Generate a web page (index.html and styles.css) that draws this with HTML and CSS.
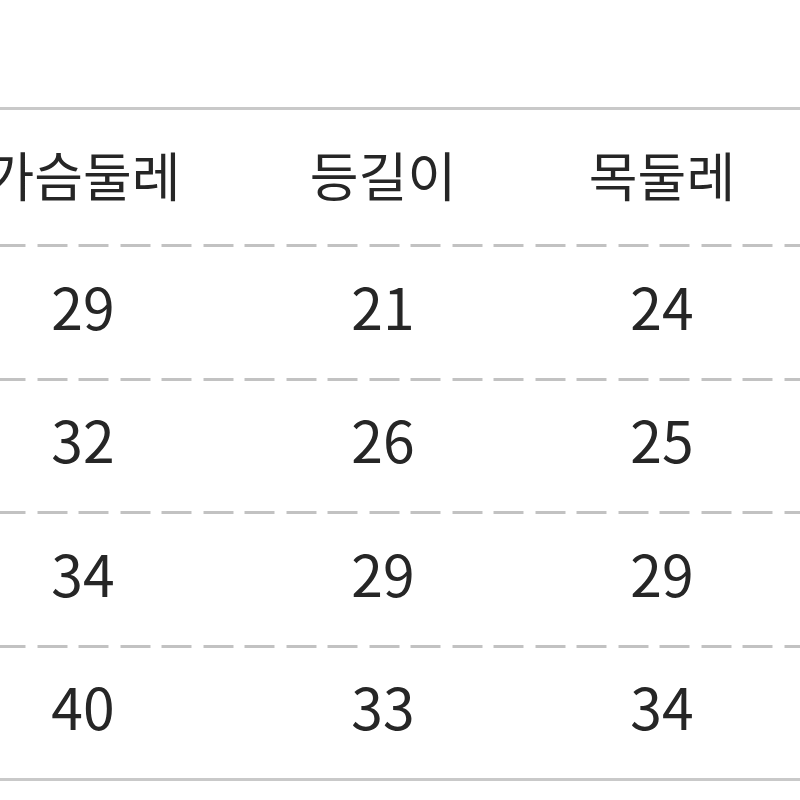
FILE: index.html
```html
<!DOCTYPE html>
<html lang="ko">
<head>
<meta charset="utf-8">
<link rel="stylesheet" href="styles.css">
</head>
<body>
<div class="sheet">
  <div class="rule solid"></div>
  <div class="row head">
    <div class="cell">가슴둘레</div>
    <div class="cell">등길이</div>
    <div class="cell">목둘레</div>
    <div class="cell"></div>
  </div>
  <div class="rule dashed"></div>
  <div class="row">
    <div class="cell num">29</div>
    <div class="cell num">21</div>
    <div class="cell num">24</div>
    <div class="cell"></div>
  </div>
  <div class="rule dashed"></div>
  <div class="row">
    <div class="cell num">32</div>
    <div class="cell num">26</div>
    <div class="cell num">25</div>
    <div class="cell"></div>
  </div>
  <div class="rule dashed"></div>
  <div class="row">
    <div class="cell num">34</div>
    <div class="cell num">29</div>
    <div class="cell num">29</div>
    <div class="cell"></div>
  </div>
  <div class="rule dashed"></div>
  <div class="row">
    <div class="cell num">40</div>
    <div class="cell num">33</div>
    <div class="cell num">34</div>
    <div class="cell"></div>
  </div>
  <div class="rule solid"></div>
</div>
</body>
</html>
```

FILE: styles.css
```css
html, body {
  margin: 0;
  padding: 0;
  background: #ffffff;
  overflow: hidden;
}

body {
  width: 800px;
  height: 800px;
  font-family: "Noto Sans CJK KR", "Noto Sans", sans-serif;
  font-weight: 400;
  color: #262626;
}

.sheet {
  display: flex;
  flex-direction: column;
  padding-top: 107px;
  margin-left: -67px;
  width: 1200px;
}

.rule {
  height: 3px;
  flex: none;
}

.rule.solid {
  background: #c9c9c9;
}

.rule.dashed {
  background-image: repeating-linear-gradient(to right, #c2c2c2 0 30px, transparent 30px 41.5px);
  background-position: 62.5px 0;
}

.row {
  display: grid;
  grid-template-columns: 300px 300px 258px 300px;
  height: 130.5px;
  padding-bottom: 14px;
  box-sizing: border-box;
  align-items: center;
}

.row.head {
  height: 134px;
  padding-bottom: 6px;
}

.cell {
  text-align: center;
  font-size: 53px;
  line-height: 1;
}

.cell.num {
  font-size: 57px;
}
```
